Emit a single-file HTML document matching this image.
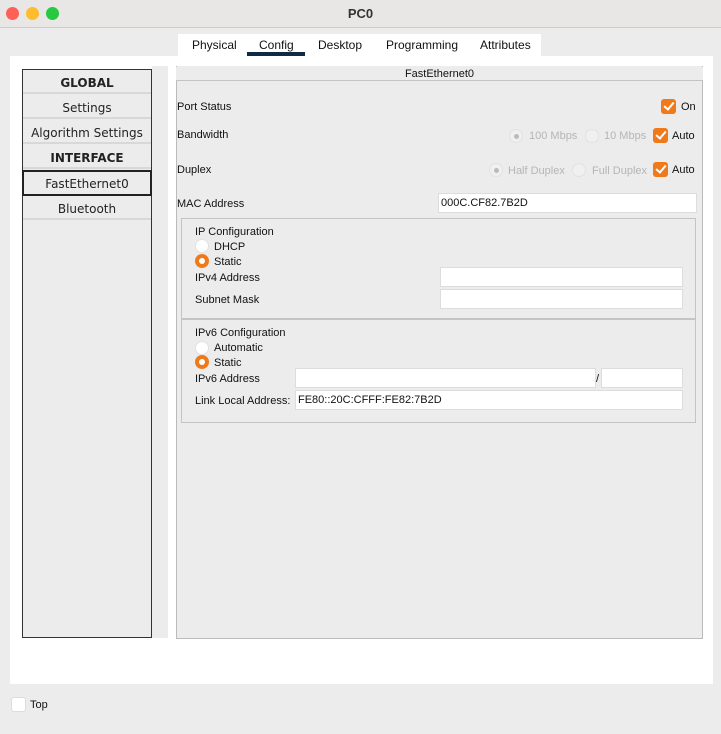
<!DOCTYPE html>
<html><head><style>
*{box-sizing:border-box;margin:0;padding:0}
body{width:721px;height:734px;background:#ececec;font-family:"Liberation Sans",Helvetica,sans-serif;font-size:11px;color:#111;position:relative;overflow:hidden}
.a{position:absolute}
.tb{left:0;top:0;width:721px;height:28px;background:#e9e7e6;border-bottom:1px solid #cfcdcb}
.dot{top:7px;width:13px;height:13px;border-radius:50%}
.title{left:0;width:721px;top:6px;text-align:center;font-size:13px;font-weight:bold;color:#333}
.tabs{left:178px;top:34px;width:363px;height:22px;background:#fff}
.tab{top:38px;font-size:12px;color:#111}
.panel{left:10px;top:56px;width:703px;height:628px;background:#fff}
.list{left:22px;top:69px;width:130px;height:569px;background:#ececec;border:1px solid #333}
.item{position:absolute;left:0;width:128px;height:24px;border-bottom:2px solid #d8d8d8;background:#ececec;text-align:center;line-height:27px;font-family:"DejaVu Sans",sans-serif;font-size:12px;color:#222}
.strip{left:152px;top:66px;width:16px;height:572px;background:#ececec}
.rp{left:176px;top:66px;width:527px;height:573px;background:#ececec;border:1px solid #bbb;border-top:none}
.hdr{left:176px;top:67px;width:527px;height:14px;border-bottom:1px solid #c4c4c4;text-align:center;font-size:11px;line-height:14px;background:#ececec}
.inp{background:#fff;border:1px solid #ddd;height:20px;font-size:11px;line-height:19px;padding-left:2px}
.cb{width:15px;height:15px;background:#f07a1a;border-radius:3px}
.cb::after{content:"";position:absolute;left:5px;top:1px;width:4px;height:8px;border:solid #fff;border-width:0 2px 2px 0;transform:rotate(40deg)}
.rad{width:14px;height:14px;border-radius:50%;background:#fff;border:1px solid #e2e2e2}
.rad.on{background:#f07a1a;border:none}
.rad.on::after{content:"";position:absolute;left:4px;top:4px;width:6px;height:6px;border-radius:50%;background:#fff}
.rad.dis{background:#f0f0f0}
.rad.dis.s::after{content:"";position:absolute;left:4px;top:4px;width:5px;height:5px;border-radius:50%;background:#bbb}
.g{color:#b5b5b5}
.box{border:1px solid #c4c4c4;background:#ececec}
</style></head><body>
<div class="a tb"></div>
<div class="a dot" style="left:6px;background:#fe5f57"></div>
<div class="a dot" style="left:26px;background:#febc2e"></div>
<div class="a dot" style="left:46px;background:#28c840"></div>
<div class="a title">PC0</div>
<div class="a tabs"></div>
<div class="a tab" style="left:192px">Physical</div>
<div class="a tab" style="left:259px">Config</div>
<div class="a" style="left:247px;top:52px;width:58px;height:4px;background:#0f2a44"></div>
<div class="a tab" style="left:318px">Desktop</div>
<div class="a tab" style="left:386px">Programming</div>
<div class="a tab" style="left:480px">Attributes</div>
<div class="a panel"></div>
<div class="a list">
<div class="item" style="top:0;font-weight:bold">GLOBAL</div>
<div class="item" style="top:25px">Settings</div>
<div class="item" style="top:50px">Algorithm Settings</div>
<div class="item" style="top:75px;font-weight:bold">INTERFACE</div>
<div class="item" style="top:100px;border:2px solid #222;left:-1px;width:130px;height:26px;line-height:24px">FastEthernet0</div>
<div class="item" style="top:126px">Bluetooth</div>
</div>
<div class="a strip"></div>
<div class="a rp"></div>
<div class="a hdr">FastEthernet0</div>
<div class="a" style="left:177px;top:101px">Port Status</div>
<div class="a cb" style="left:661px;top:99px"></div><div class="a" style="left:681px;top:101px">On</div>
<div class="a" style="left:177px;top:129px">Bandwidth</div>
<div class="a rad dis s" style="left:509px;top:129px"></div><div class="a g" style="left:529px;top:130px">100 Mbps</div>
<div class="a rad dis" style="left:585px;top:129px"></div><div class="a g" style="left:604px;top:130px">10 Mbps</div>
<div class="a cb" style="left:653px;top:128px"></div><div class="a" style="left:672px;top:130px">Auto</div>
<div class="a" style="left:177px;top:164px">Duplex</div>
<div class="a rad dis s" style="left:489px;top:163px"></div><div class="a g" style="left:508px;top:165px">Half Duplex</div>
<div class="a rad dis" style="left:572px;top:163px"></div><div class="a g" style="left:592px;top:165px">Full Duplex</div>
<div class="a cb" style="left:653px;top:162px"></div><div class="a" style="left:672px;top:164px">Auto</div>
<div class="a" style="left:177px;top:198px">MAC Address</div>
<div class="a inp" style="left:438px;top:193px;width:259px">000C.CF82.7B2D</div>
<div class="a box" style="left:181px;top:218px;width:515px;height:101px"></div>
<div class="a" style="left:195px;top:226px">IP Configuration</div>
<div class="a rad" style="left:195px;top:239px"></div><div class="a" style="left:214px;top:241px">DHCP</div>
<div class="a rad on" style="left:195px;top:254px"></div><div class="a" style="left:214px;top:256px">Static</div>
<div class="a" style="left:195px;top:272px">IPv4 Address</div>
<div class="a inp" style="left:440px;top:267px;width:243px"></div>
<div class="a" style="left:195px;top:294px">Subnet Mask</div>
<div class="a inp" style="left:440px;top:289px;width:243px"></div>
<div class="a box" style="left:181px;top:319px;width:515px;height:104px"></div>
<div class="a" style="left:195px;top:327px">IPv6 Configuration</div>
<div class="a rad" style="left:195px;top:341px"></div><div class="a" style="left:214px;top:342px">Automatic</div>
<div class="a rad on" style="left:195px;top:355px"></div><div class="a" style="left:214px;top:357px">Static</div>
<div class="a" style="left:195px;top:373px">IPv6 Address</div>
<div class="a inp" style="left:295px;top:368px;width:301px"></div>
<div class="a" style="left:596px;top:373px">/</div>
<div class="a inp" style="left:601px;top:368px;width:82px"></div>
<div class="a" style="left:195px;top:395px">Link Local Address:</div>
<div class="a inp" style="left:295px;top:390px;width:388px">FE80::20C:CFFF:FE82:7B2D</div>
<div class="a" style="left:11px;top:697px;width:15px;height:15px;background:#fff;border:1px solid #ddd;border-radius:3px"></div>
<div class="a" style="left:30px;top:699px">Top</div>
</body></html>
